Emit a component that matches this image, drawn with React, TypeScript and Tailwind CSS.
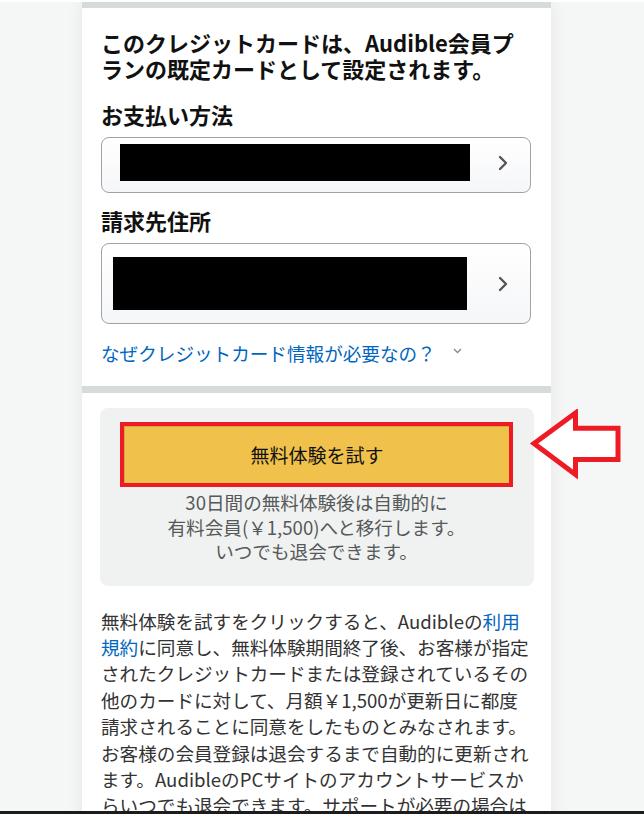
import React from 'react'

const font = { fontFamily: '"Noto Sans CJK JP", "Noto Sans", sans-serif' }

function ChevronRight() {
  return (
    <svg width="10" height="16" viewBox="0 0 10 16" className="shrink-0">
      <path d="M2 2 L8 8 L2 14" fill="none" stroke="#555" strokeWidth="2.4" strokeLinecap="round" strokeLinejoin="round" />
    </svg>
  )
}

/** Selectable row box with a hidden (blacked out) value */
function SelectBox({ h, pad, bar }: { h: string; pad: string; bar: string }) {
  return (
    <div
      className={`flex items-center justify-between rounded-lg border border-[#a2a2a2] bg-linear-to-b from-white to-[#f5f6f8] ${h} ${pad}`}
    >
      <div className={`bg-black ${bar}`} />
      <ChevronRight />
    </div>
  )
}

export default function App() {
  return (
    <div className="relative flex h-[814px] flex-col overflow-hidden bg-[#f5f6f6]" style={font}>
      <div className="h-[2px] bg-white" />
      <div className="flex-1 overflow-hidden">
        <div className="ml-[82px] w-[469px] bg-white shadow-[0_0_16px_rgba(0,0,0,0.07)]">
          <div className="h-[6px] bg-[#d5dbdb]" />

          {/* Card / address section */}
          <div className="pl-[19px] pr-[20px] pt-[21px] pb-[20px] text-[#111]">
            <h1 className="text-[22px] font-bold leading-[26px]">
              このクレジットカードは、Audible会員プ
              <br />
              ランの既定カードとして設定されます。
            </h1>

            <h2 className="mt-[20px] text-[22px] font-bold leading-[26px]">お支払い方法</h2>
            <div className="mt-[10px]">
              <SelectBox h="h-[56px]" pad="pl-[18px] pr-[22px] pb-[5px]" bar="h-[37px] w-[350px]" />
            </div>

            <h2 className="mt-[14px] text-[22px] font-bold leading-[26px]">請求先住所</h2>
            <div className="mt-[10px]">
              <SelectBox h="h-[81px]" pad="pl-[11px] pr-[22px]" bar="h-[53px] w-[354px]" />
            </div>

            <div className="mt-[16px] flex items-center text-[18.6px] leading-[26px] text-[#0066c0]">
              <span>なぜクレジットカード情報が必要なの？</span>
              <svg width="9" height="6" viewBox="0 0 9 6" className="ml-[17px] mt-[-4px]">
                <path d="M1 1 L4.5 4.5 L8 1" fill="none" stroke="#8a8a8a" strokeWidth="1.4" />
              </svg>
            </div>
          </div>

          <div className="h-[7px] bg-[#d5dbdb]" />

          {/* Free trial */}
          <div className="pl-[18px] pr-[17px] pt-[15px]">
            <div className="rounded-lg bg-[#f0f2f2] pl-[20px] pr-[21px] pt-[14px] pb-[22px]">
              <div className="border-[4px] border-[#ed1c24]">
                <button className="flex h-[57px] w-full items-center justify-center border-t border-l border-[#a88734]/40 bg-[#f0c14b] text-[19px] text-[#111]">
                  無料体験を試す
                </button>
              </div>
              <p className="mt-[3px] text-center text-[18.6px] leading-[24.5px] text-[#565959]">
                30日間の無料体験後は自動的に
                <br />
                有料会員(￥1,500)へと移行します。
                <br />
                いつでも退会できます。
              </p>
            </div>
          </div>

          <p className="pl-[19px] pr-[14px] pt-[22px] text-[18.6px] leading-[26.4px] text-[#333]">
            無料体験を試すをクリックすると、Audibleの<span className="text-[#0066c0]">利用</span>
            <br />
            <span className="text-[#0066c0]">規約</span>に同意し、無料体験期間終了後、お客様が指定
            <br />
            されたクレジットカードまたは登録されているその
            <br />
            他のカードに対して、月額￥1,500が更新日に都度
            <br />
            請求されることに同意をしたものとみなされます。
            <br />
            お客様の会員登録は退会するまで自動的に更新され
            <br />
            ます。AudibleのPCサイトのアカウントサービスか
            <br />
            らいつでも退会できます。サポートが必要の場合は
          </p>
        </div>
      </div>
      <div className="h-[3px] bg-[#1c1c1c]" />

      {/* Annotation arrow */}
      <svg className="absolute left-[528px] top-[409px]" width="95" height="70" viewBox="0 0 95 70">
        <polygon
          points="6,34.5 47.5,4 47.5,19.3 90,19.3 90,50.5 47.5,50.5 47.5,65.5"
          fill="white"
          stroke="#ed1c24"
          strokeWidth="5"
          strokeLinejoin="miter"
        />
      </svg>
    </div>
  )
}
